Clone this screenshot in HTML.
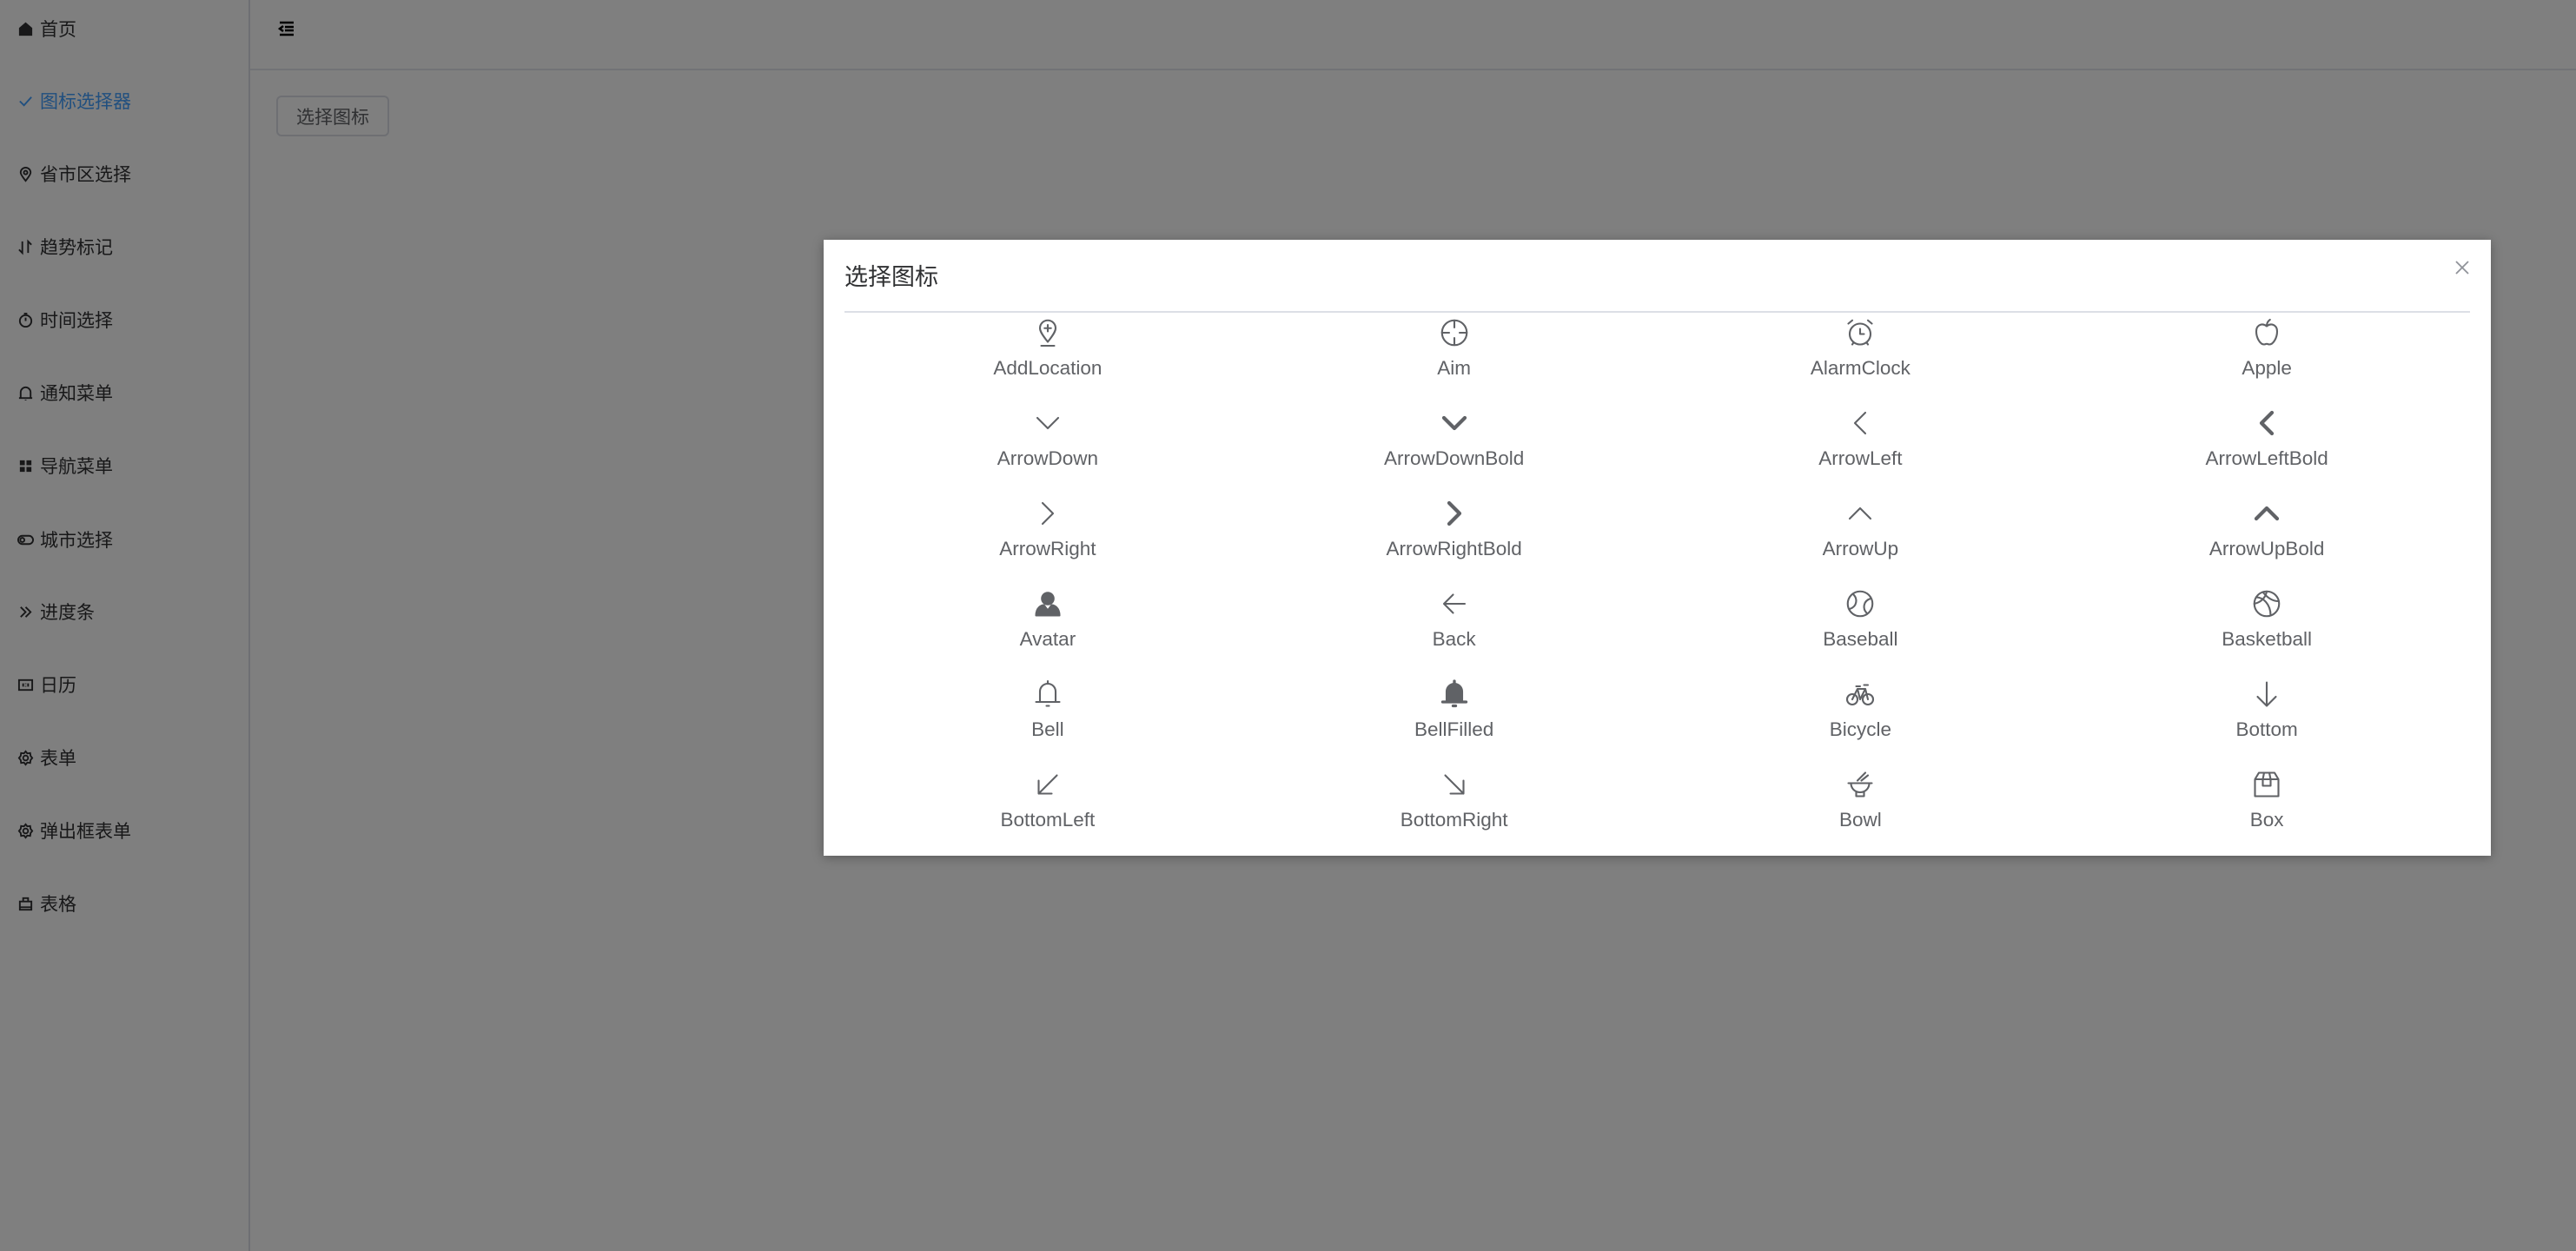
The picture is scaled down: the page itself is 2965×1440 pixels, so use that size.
<!DOCTYPE html>
<html><head><meta charset="utf-8"><style>
*{margin:0;padding:0;box-sizing:border-box}
html,body{width:2965px;height:1440px;overflow:hidden;background:#fff;font-family:"Liberation Sans","Noto Sans CJK SC",sans-serif}
.side{position:absolute;left:0;top:0;width:288px;height:1440px;border-right:2px solid #dcdfe6;background:#fff}
.item{position:absolute;left:20px;height:40px;display:flex;align-items:center;font-size:21px;color:#303133}
.item svg{width:19px;height:19px;margin-right:7px;fill:none;stroke:#303133;stroke-width:2}
.item.act{color:#409eff}.item.act svg{stroke:#409eff}
.head{position:absolute;left:288px;top:0;right:0;height:81px;border-bottom:2px solid #e4e7ed}
.btn{position:absolute;left:318px;top:110px;width:130px;height:47px;border:2px solid #dcdfe6;border-radius:6px;font-size:21px;color:#606266;display:flex;align-items:center;justify-content:center}
.ov{position:absolute;inset:0;background:rgba(0,0,0,.5)}
.dlg{position:absolute;left:948px;top:276px;width:1919px;height:709px;background:#fff;overflow:hidden;box-shadow:0 2px 12px rgba(0,0,0,.3)}
.title{position:absolute;left:24px;top:24px;font-size:27px;color:#303133;line-height:38px}
.close{position:absolute;right:24px;top:23px;width:18px;height:18px}
.line{position:absolute;left:24px;right:24px;top:82px;border-top:2px solid #dcdfe6}
.grid{position:absolute;left:24px;top:89px;width:1871px;display:grid;grid-template-columns:repeat(4,1fr);grid-auto-rows:104px}
.cell{display:flex;flex-direction:column;align-items:center}
.cell svg{width:36px;height:36px;fill:none;stroke:#606266;stroke-width:1.4;stroke-linecap:round;stroke-linejoin:round}
.cell svg.b{stroke-width:2.8}
.cell span{margin-top:10px;font-size:22.5px;line-height:26px;color:#606266}
</style></head><body>
<div class="side">
<div class="item" style="top:13px"><svg viewBox="0 0 20 20"><path d="M3 9L10 3L17 9V17H3Z" fill="#303133"/></svg>首页</div>
<div class="item act" style="top:96px"><svg viewBox="0 0 20 20"><path d="M3 10L8 15L17 5"/></svg>图标选择器</div>
<div class="item" style="top:180px"><svg viewBox="0 0 20 20"><path d="M10 18C6 13 4 10 4 8A6 6 0 0 1 16 8C16 10 14 13 10 18Z"/><circle cx="10" cy="8" r="2.2"/></svg>省市区选择</div>
<div class="item" style="top:264px"><svg viewBox="0 0 20 20"><path d="M6 3V17L2 13M13 17V3L17 7"/></svg>趋势标记</div>
<div class="item" style="top:348px"><svg viewBox="0 0 20 20"><circle cx="10" cy="11" r="7"/><path d="M10 11V7M8 2H12"/></svg>时间选择</div>
<div class="item" style="top:432px"><svg viewBox="0 0 20 20"><path d="M4 16V9A6 6 0 0 1 16 9V16ZM2 16H18M10 18V19"/></svg>通知菜单</div>
<div class="item" style="top:516px"><svg viewBox="0 0 20 20"><path d="M3 3H9V9H3ZM11 3H17V9H11ZM3 11H9V17H3ZM11 11H17V17H11Z" fill="#303133" stroke="none"/></svg>导航菜单</div>
<div class="item" style="top:601px"><svg viewBox="0 0 20 20"><rect x="1" y="5" width="18" height="10" rx="5"/><circle cx="6" cy="10" r="2.5"/></svg>城市选择</div>
<div class="item" style="top:684px"><svg viewBox="0 0 20 20"><path d="M4 4L10 10L4 16M10 4L16 10L10 16"/></svg>进度条</div>
<div class="item" style="top:768px"><svg viewBox="0 0 20 20"><rect x="2" y="4" width="16" height="12"/><path d="M7 8V12M13 8V12M10 8V9M10 11V12"/></svg>日历</div>
<div class="item" style="top:852px"><svg viewBox="0 0 20 20"><circle cx="10" cy="10" r="3"/><path d="M10 2L12 4.5L15.5 4L16 7.5L18 10L16 12.5L15.5 16L12 15.5L10 18L8 15.5L4.5 16L4 12.5L2 10L4 7.5L4.5 4L8 4.5Z"/></svg>表单</div>
<div class="item" style="top:936px"><svg viewBox="0 0 20 20"><circle cx="10" cy="10" r="3"/><path d="M10 2L12 4.5L15.5 4L16 7.5L18 10L16 12.5L15.5 16L12 15.5L10 18L8 15.5L4.5 16L4 12.5L2 10L4 7.5L4.5 4L8 4.5Z"/></svg>弹出框表单</div>
<div class="item" style="top:1020px"><svg viewBox="0 0 20 20"><path d="M3 7H17V17H3ZM7 7V3H13V7M3 14H17"/></svg>表格</div>
</div>
<div class="head"><svg style="position:absolute;left:32px;top:24px" width="20" height="18" viewBox="0 0 20 18"><path d="M2 2H18M8 7H18M8 11H18M2 16H18M6 6L2 9L6 12" stroke="#000" stroke-width="2.5" fill="none"/></svg></div>
<div class="btn">选择图标</div>
<div class="ov"></div>
<div class="dlg">
<div class="title">选择图标</div>
<svg class="close" viewBox="0 0 18 18"><path d="M2 2L16 16M16 2L2 16" stroke="#909399" stroke-width="1.8"/></svg>
<div class="line"></div>
<div class="grid">
<div class="cell"><svg viewBox="0 0 24 24"><path d="M12 19C8 14 6 11 6 8.5A6 6 0 0 1 18 8.5C18 11 16 14 12 19ZM7 22H17M12 6V11M9.5 8.5H14.5"/></svg><span>AddLocation</span></div>
<div class="cell"><svg viewBox="0 0 24 24"><circle cx="12" cy="12" r="9.5"/><path d="M12 2.5V8M12 16V21.5M2.5 12H8M16 12H21.5"/></svg><span>Aim</span></div>
<div class="cell"><svg viewBox="0 0 24 24"><circle cx="12" cy="13" r="8"/><path d="M12 9V13H15M3 5L6 2.5M21 5L18 2.5M6 21L7 19.5M18 21L17 19.5"/></svg><span>AlarmClock</span></div>
<div class="cell"><svg viewBox="0 0 24 24"><path d="M12 7C9 4.5 4 5.5 4 11C4 16 7 21 10 21C11 21 11.5 20.5 12 20.5C12.5 20.5 13 21 14 21C17 21 20 16 20 11C20 5.5 15 4.5 12 7ZM12 7C12 5 13 3 14.5 2"/></svg><span>Apple</span></div>
<div class="cell"><svg viewBox="0 0 24 24"><path d="M4 8L12 16L20 8"/></svg><span>ArrowDown</span></div>
<div class="cell"><svg class="b" viewBox="0 0 24 24"><path d="M4 8L12 16L20 8"/></svg><span>ArrowDownBold</span></div>
<div class="cell"><svg viewBox="0 0 24 24"><path d="M16 4L8 12L16 20"/></svg><span>ArrowLeft</span></div>
<div class="cell"><svg class="b" viewBox="0 0 24 24"><path d="M16 4L8 12L16 20"/></svg><span>ArrowLeftBold</span></div>
<div class="cell"><svg viewBox="0 0 24 24"><path d="M8 4L16 12L8 20"/></svg><span>ArrowRight</span></div>
<div class="cell"><svg class="b" viewBox="0 0 24 24"><path d="M8 4L16 12L8 20"/></svg><span>ArrowRightBold</span></div>
<div class="cell"><svg viewBox="0 0 24 24"><path d="M4 16L12 8L20 16"/></svg><span>ArrowUp</span></div>
<div class="cell"><svg class="b" viewBox="0 0 24 24"><path d="M4 16L12 8L20 16"/></svg><span>ArrowUpBold</span></div>
<div class="cell"><svg viewBox="0 0 24 24"><circle cx="12" cy="8" r="4.5" fill="#606266"/><path d="M3 21C3 15 7 13 9 13L12 17L15 13C17 13 21 15 21 21Z" fill="#606266"/></svg><span>Avatar</span></div>
<div class="cell"><svg viewBox="0 0 24 24"><path d="M20 12H4M11 5L4 12L11 19"/></svg><span>Back</span></div>
<div class="cell"><svg viewBox="0 0 24 24"><circle cx="12" cy="12" r="9.5"/><path d="M7 5C10 8 10 14 4 16M17 19C14 16 14 10 20 8"/></svg><span>Baseball</span></div>
<div class="cell"><svg viewBox="0 0 24 24"><circle cx="12" cy="12" r="9.5"/><path d="M4 7C9 7 15 12 15 21M2.5 12C7 11 11 8 12 2.5M9 3C13 8 17 10 21 10"/></svg><span>Basketball</span></div>
<div class="cell"><svg viewBox="0 0 24 24"><path d="M6 18V10A6 6 0 0 1 18 10V18ZM3 18H21M12 2V4M11 21H13"/></svg><span>Bell</span></div>
<div class="cell"><svg viewBox="0 0 24 24"><path d="M6 18V10A6 6 0 0 1 18 10V18Z" fill="#606266"/><path d="M3 18H21M12 2V4M11 21H13" stroke-width="2.2"/></svg><span>BellFilled</span></div>
<div class="cell"><svg viewBox="0 0 24 24"><circle cx="6" cy="16" r="4"/><circle cx="18" cy="16" r="4"/><path d="M6 16L10 8H16L18 16M9 6H12M10 8L12 16L16 8M15 5H18"/></svg><span>Bicycle</span></div>
<div class="cell"><svg viewBox="0 0 24 24"><path d="M12 3V21M5 14L12 21L19 14"/></svg><span>Bottom</span></div>
<div class="cell"><svg viewBox="0 0 24 24"><path d="M19 5L5 19M5 9V19H15"/></svg><span>BottomLeft</span></div>
<div class="cell"><svg viewBox="0 0 24 24"><path d="M5 5L19 19M19 9V19H9"/></svg><span>BottomRight</span></div>
<div class="cell"><svg viewBox="0 0 24 24"><path d="M3 11H21M5 11C5 15 8 18 12 18C16 18 19 15 19 11M9 18V21H15V18M10 9L16 3M13 9L18 5"/></svg><span>Bowl</span></div>
<div class="cell"><svg viewBox="0 0 24 24"><path d="M3 8L6 3H18L21 8V21H3ZM3 8H21M10 3L9 8V13H15V8L14 3"/></svg><span>Box</span></div>
</div>
</div>
</body></html>
